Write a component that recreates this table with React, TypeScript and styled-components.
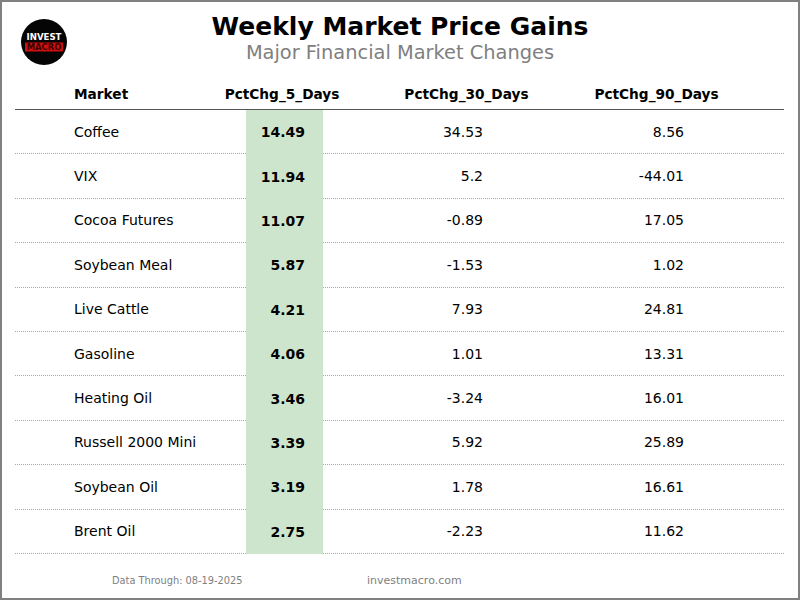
import React from 'react';
import styled, { createGlobalStyle } from 'styled-components';

// Types
interface MarketRow {
  market: string;
  d5: string;
  d30: string;
  d90: string;
}

const rows: MarketRow[] = [
  { market: 'Coffee', d5: '14.49', d30: '34.53', d90: '8.56' },
  { market: 'VIX', d5: '11.94', d30: '5.2', d90: '-44.01' },
  { market: 'Cocoa Futures', d5: '11.07', d30: '-0.89', d90: '17.05' },
  { market: 'Soybean Meal', d5: '5.87', d30: '-1.53', d90: '1.02' },
  { market: 'Live Cattle', d5: '4.21', d30: '7.93', d90: '24.81' },
  { market: 'Gasoline', d5: '4.06', d30: '1.01', d90: '13.31' },
  { market: 'Heating Oil', d5: '3.46', d30: '-3.24', d90: '16.01' },
  { market: 'Russell 2000 Mini', d5: '3.39', d30: '5.92', d90: '25.89' },
  { market: 'Soybean Oil', d5: '3.19', d30: '1.78', d90: '16.61' },
  { market: 'Brent Oil', d5: '2.75', d30: '-2.23', d90: '11.62' },
];

const GlobalStyle = createGlobalStyle`
  html, body {
    margin: 0;
    padding: 0;
    background: #ffffff;
    font-family: "DejaVu Sans", "Liberation Sans", sans-serif;
  }
`;

// Styled Components
const Frame = styled.div`
  width: 800px;
  height: 600px;
  box-sizing: border-box;
  border: 2px solid #808080;
  background: #ffffff;
  display: flex;
  flex-direction: column;
`;

const Header = styled.div`
  flex-shrink: 0;
  height: 77px;
  display: grid;
  grid-template-columns: 1fr auto 1fr;
  align-items: start;
`;

const LogoCell = styled.div`
  padding: 17px 0 0 19px;
`;

const TitleBlock = styled.div`
  padding-top: 11px;
  text-align: center;
`;

const Title = styled.h1`
  margin: 0;
  font-size: 25px;
  line-height: 28px;
  font-weight: 700;
  color: #000;
`;

const Subtitle = styled.div`
  font-size: 19.4px;
  line-height: 24px;
  color: #808080;
`;

const Table = styled.div`
  flex-shrink: 0;
  margin: 0 14px 0 13px;
  display: flex;
  flex-direction: column;
`;

const columns = '231px 77px 286px 94px 1fr';

const HeadRow = styled.div`
  display: grid;
  grid-template-columns: ${columns};
  height: 30px;
  border-bottom: 1px solid #555555;
  align-items: center;
`;

const HeadCell = styled.div<{ $left?: boolean; $shift?: number }>`
  display: flex;
  justify-content: ${p => (p.$left ? 'flex-start' : 'center')};
  padding-left: ${p => (p.$left ? '59px' : '0')};
  margin-left: ${p => p.$shift ?? 0}px;
  white-space: nowrap;
  font-size: 13.7px;
  font-weight: 700;
  color: #000;
`;

const Row = styled.div`
  display: grid;
  grid-template-columns: ${columns};
  height: 44.4px;
  box-sizing: border-box;
  border-bottom: 1px dotted #a8a8a8;
`;

const Cell = styled.div<{ $pad: number; $right?: boolean; $hl?: boolean }>`
  display: flex;
  align-items: center;
  justify-content: ${p => (p.$right ? 'flex-end' : 'flex-start')};
  padding-${p => (p.$right ? 'right' : 'left')}: ${p => p.$pad}px;
  font-size: 14px;
  font-weight: ${p => (p.$hl ? 700 : 400)};
  background: ${p => (p.$hl ? '#cee5cd' : 'transparent')};
  margin-bottom: ${p => (p.$hl ? '-1px' : '0')};
  color: #000;
  white-space: nowrap;
`;

const Footer = styled.div`
  flex: 1;
  display: flex;
  align-items: center;
  padding: 9px 0 0 110px;
  color: #808080;
`;

const DataNote = styled.span`
  font-size: 9.8px;
  width: 255px;
`;

const Site = styled.span`
  font-size: 11px;
`;

const Logo: React.FC = () => (
  <svg width="46" height="46" viewBox="0 0 46 46">
    <circle cx="23" cy="23" r="23" fill="#050505" />
    <text x="23" y="21" textAnchor="middle" fontFamily="DejaVu Sans" fontWeight="700" fontSize="8.6" fill="#ffffff">
      INVEST
    </text>
    <rect x="4" y="23.5" width="38" height="9" fill="#d00f0f" />
    <text x="23" y="31" textAnchor="middle" fontFamily="DejaVu Sans" fontWeight="700" fontSize="8.4" fill="#3a0000">
      MACRO
    </text>
  </svg>
);

export default function App() {
  return (
    <>
      <GlobalStyle />
      <Frame>
        <Header>
          <LogoCell>
            <Logo />
          </LogoCell>
          <TitleBlock>
            <Title>Weekly Market Price Gains</Title>
            <Subtitle>Major Financial Market Changes</Subtitle>
          </TitleBlock>
          <div />
        </Header>
        <Table>
          <HeadRow>
            <HeadCell $left>Market</HeadCell>
            <HeadCell $shift={-5}>PctChg_5_Days</HeadCell>
            <HeadCell $shift={1}>PctChg_30_Days</HeadCell>
            <HeadCell $shift={1}>PctChg_90_Days</HeadCell>
            <div />
          </HeadRow>
          {rows.map(r => (
            <Row key={r.market}>
              <Cell $pad={59}>{r.market}</Cell>
              <Cell $pad={18} $right $hl>{r.d5}</Cell>
              <Cell $pad={126} $right>{r.d30}</Cell>
              <Cell $pad={19} $right>{r.d90}</Cell>
              <div />
            </Row>
          ))}
        </Table>
        <Footer>
          <DataNote>Data Through: 08-19-2025</DataNote>
          <Site>investmacro.com</Site>
        </Footer>
      </Frame>
    </>
  );
}
